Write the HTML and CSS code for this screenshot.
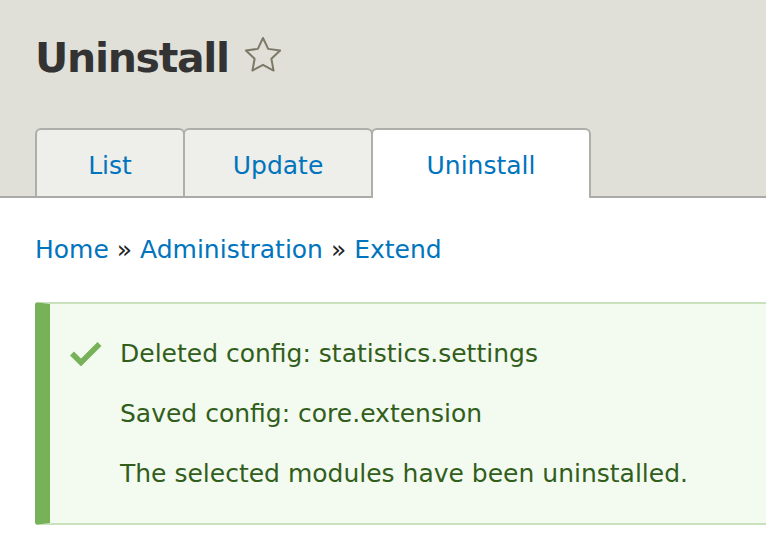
FILE: index.html
```html
<!DOCTYPE html>
<html lang="en">
<head>
<meta charset="utf-8">
<title>Uninstall</title>
<link rel="stylesheet" href="styles.css">
</head>
<body>
<header class="page-header">
  <h1 class="page-title">Uninstall
    <svg class="shortcut-star" width="40" height="40" viewBox="0 0 40 40" aria-hidden="true">
      <polygon points="20,2 25.17,12.88 37.12,14.44 28.37,22.72 30.58,34.56 20,28.8 9.42,34.56 11.63,22.72 2.88,14.44 14.83,12.88" fill="none" stroke="#7c7968" stroke-width="2" stroke-linejoin="round"/>
    </svg>
  </h1>
  <nav class="tabs">
    <a class="tab tab-list" href="#">List</a>
    <a class="tab tab-update" href="#">Update</a>
    <a class="tab tab-uninstall is-active" href="#">Uninstall</a>
  </nav>
</header>
<main class="content">
  <nav class="breadcrumb">
    <a href="#">Home</a> <span class="sep">»</span> <a href="#">Administration</a> <span class="sep">»</span> <a href="#">Extend</a>
  </nav>
  <div class="messages messages-status">
    <svg class="check" width="32" height="24" viewBox="0 0 32 24" aria-hidden="true">
      <path d="M2 11.5 L11 20.5 L29.5 2" fill="none" stroke="#77b259" stroke-width="5.5"/>
    </svg>
    <ul class="message-list">
      <li>Deleted config: statistics.settings</li>
      <li>Saved config: core.extension</li>
      <li>The selected modules have been uninstalled.</li>
    </ul>
  </div>
</main>
</body>
</html>
```

FILE: styles.css
```css
html, body {
  margin: 0;
  padding: 0;
  background: #ffffff;
}
body {
  font-family: "DejaVu Sans", "Liberation Sans", sans-serif;
  font-size: 25px;
  color: #222222;
  overflow: hidden;
}
a {
  color: #0074bd;
  text-decoration: none;
}
.page-header {
  background: #e0e0d8;
  border-bottom: 2px solid #aaaaa6;
  padding: 33px 0 0 35px;
}
.page-title {
  display: flex;
  align-items: center;
  margin: 0;
  font-size: 41px;
  line-height: 50px;
  font-weight: bold;
  letter-spacing: -1.3px;
  color: #333333;
}
.shortcut-star {
  margin-left: 14px;
  margin-bottom: 5px;
}
.tabs {
  display: flex;
  align-items: flex-start;
  margin-top: 45px;
  margin-bottom: -2px;
}
.tab {
  box-sizing: border-box;
  height: 68px;
  padding-top: 5px;
  line-height: 61px;
  text-align: center;
  background: #eeeeea;
  border: 2px solid #aeaeaa;
  border-bottom: none;
  border-radius: 6px 6px 0 0;
}
.tab + .tab {
  margin-left: -2px;
}
.tab-list { width: 150px; }
.tab-update { width: 190px; }
.tab-uninstall { width: 220px; }
.tab.is-active {
  background: #ffffff;
  height: 70px;
  padding-bottom: 2px;
  position: relative;
}
.content {
  padding: 34px 0 0 35px;
}
.breadcrumb {
  line-height: 36px;
}
.breadcrumb .sep {
  color: #222222;
}
.messages {
  display: flex;
  align-items: flex-start;
  margin-top: 34px;
  background: #f3faef;
  border-top: 2px solid #c9e1bd;
  border-bottom: 2px solid #c9e1bd;
  border-left: 15px solid #77b259;
  border-radius: 3px 0 0 3px;
  padding: 32px 0 31px 20px;
  color: #325e1c;
}
.check {
  flex: none;
  margin-top: 6px;
  margin-right: 18px;
}
.message-list {
  list-style: none;
  margin: 0;
  padding: 0;
  display: flex;
  flex-direction: column;
  gap: 24px;
  line-height: 36px;
}
```
